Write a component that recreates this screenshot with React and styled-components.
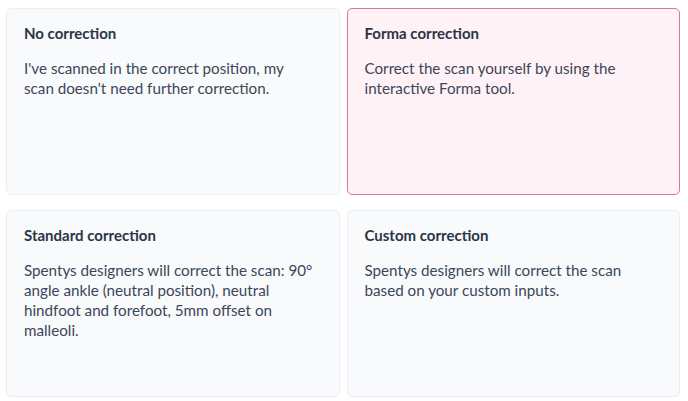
import React from "react"
import styled, { createGlobalStyle } from "styled-components"

const GlobalStyle = createGlobalStyle`
  html, body {
    margin: 0;
    padding: 0;
    background: #fff;
  }
  body {
    font-family: "Lato", "Liberation Sans", sans-serif;
  }
`

const Grid = styled.div`
  display: grid;
  grid-template-columns: 1fr 1fr;
  column-gap: 7px;
  row-gap: 15px;
  padding: 8px 8px 4px 6px;
`

const Card = styled.div`
  box-sizing: border-box;
  height: 187px;
  padding: 14px 17px;
  border-radius: 5px;
  border: 1px solid ${p => (p.selected ? "#e0739a" : "#eaeff6")};
  background: ${p => (p.selected ? "#fff2f6" : "#f8fafc")};
  cursor: pointer;
`

const Title = styled.h3`
  margin: 0 0 15px;
  font-size: 15px;
  line-height: 20px;
  font-weight: 700;
  color: #2b3545;
`

const Text = styled.p`
  margin: 0;
  max-width: 291px;
  font-size: 15.2px;
  line-height: 20px;
  color: #3b4658;
`

const options = [
  {
    title: "No correction",
    text: "I've scanned in the correct position, my scan doesn't need further correction.",
  },
  {
    title: "Forma correction",
    text: "Correct the scan yourself by using the interactive Forma tool.",
    selected: true,
  },
  {
    title: "Standard correction",
    text: "Spentys designers will correct the scan: 90° angle ankle (neutral position), neutral hindfoot and forefoot, 5mm offset on malleoli.",
  },
  {
    title: "Custom correction",
    text: "Spentys designers will correct the scan based on your custom inputs.",
  },
]

const App = () => (
  <>
    <GlobalStyle />
    <Grid>
      {options.map(o => (
        <Card key={o.title} selected={o.selected}>
          <Title>{o.title}</Title>
          <Text>{o.text}</Text>
        </Card>
      ))}
    </Grid>
  </>
)

export default App
